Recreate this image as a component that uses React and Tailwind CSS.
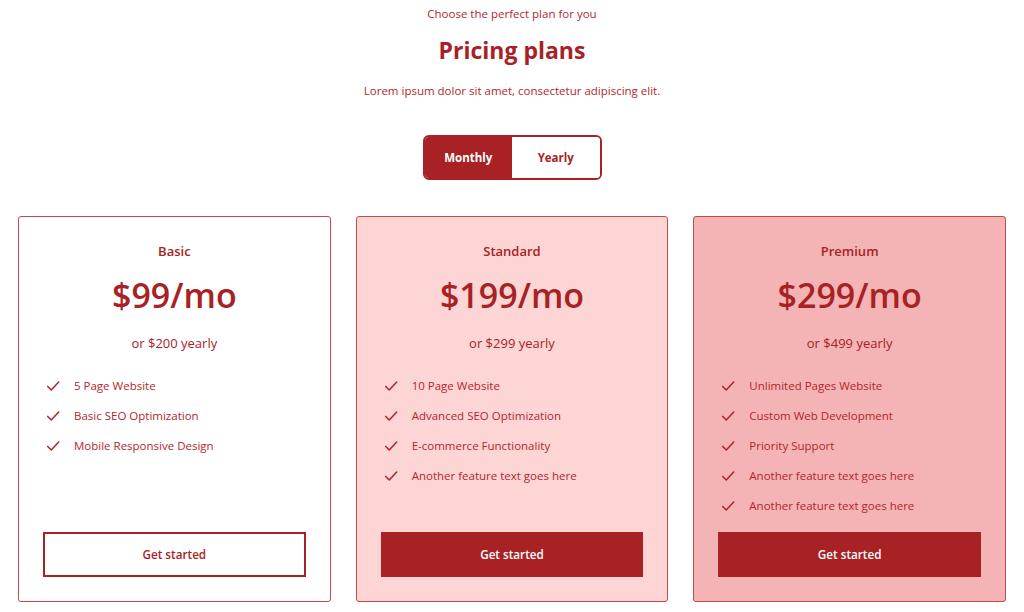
import React from 'react';

const plans = [
  {
    name: 'Basic',
    price: '$99/mo',
    yearly: 'or $200 yearly',
    features: ['5 Page Website', 'Basic SEO Optimization', 'Mobile Responsive Design'],
    card: 'bg-white',
    outline: true,
  },
  {
    name: 'Standard',
    price: '$199/mo',
    yearly: 'or $299 yearly',
    features: ['10 Page Website', 'Advanced SEO Optimization', 'E-commerce Functionality', 'Another feature text goes here'],
    card: 'bg-[#fdd5d5]',
  },
  {
    name: 'Premium',
    price: '$299/mo',
    yearly: 'or $499 yearly',
    features: ['Unlimited Pages Website', 'Custom Web Development', 'Priority Support', 'Another feature text goes here', 'Another feature text goes here'],
    card: 'bg-[#f4b3b4]',
  },
];

const Check = () => (
  <svg width="14" height="14" viewBox="0 0 16 16" fill="none" stroke="currentColor" strokeWidth="1.8" strokeLinecap="round" strokeLinejoin="round">
    <path d="M2 8.5l4 4L14.5 3.5" />
  </svg>
);

const PlanCard = ({ plan }) => (
  <div className={`${plan.card} border border-[#c9474b] rounded-[3px] h-[386px] flex flex-col px-6 pt-[24px] pb-6`}>
    <h3 className="text-center text-[13px] font-semibold text-[#a82225] leading-5">{plan.name}</h3>
    <p className="text-center text-[34px] font-semibold text-[#a82225] leading-[40px] mt-[14px]">{plan.price}</p>
    <p className="text-center text-[13px] text-[#a82225] leading-5 mt-[18px]">{plan.yearly}</p>
    <ul className="mt-[24px] flex flex-col gap-[12px]">
      {plan.features.map((f, i) => (
        <li key={i} className="flex items-center gap-[14px] pl-[3px] text-[11.5px] text-[#b3262b] leading-[18px]">
          <Check />
          <span>{f}</span>
        </li>
      ))}
    </ul>
    <div className="mt-auto">
      <button
        className={`w-full h-[45px] text-[11.7px] font-semibold ${
          plan.outline ? 'bg-white border-2 border-[#a82225] text-[#a82225]' : 'bg-[#a82225] text-white'
        }`}
      >
        Get started
      </button>
    </div>
  </div>
);

export default function App() {
  return (
    <div className="w-[1024px] h-[612px] bg-white overflow-hidden" style={{ fontFamily: '"Open Sans", "Noto Sans", sans-serif' }}>
      <div className="flex flex-col items-center pt-[5px]">
        <p className="text-[11.5px] text-[#b3262b] leading-[18px]">Choose the perfect plan for you</p>
        <h1 className="text-[23px] font-bold text-[#a82225] leading-[32px] mt-[11px]">Pricing plans</h1>
        <p className="text-[11.5px] text-[#b3262b] leading-[18px] mt-[16px]">Lorem ipsum dolor sit amet, consectetur adipiscing elit.</p>
        <div className="mt-[35px] flex w-[179px] h-[45px] border-2 border-[#a82225] rounded-[6px] overflow-hidden">
          <button className="flex-1 bg-[#a82225] text-white text-[11.5px] font-bold">Monthly</button>
          <button className="flex-1 bg-white text-[#a82225] text-[11.5px] font-bold">Yearly</button>
        </div>
      </div>
      <div className="grid grid-cols-3 gap-[25px] px-[18px] mt-[36px]">
        {plans.map((p) => (
          <PlanCard key={p.name} plan={p} />
        ))}
      </div>
    </div>
  );
}
